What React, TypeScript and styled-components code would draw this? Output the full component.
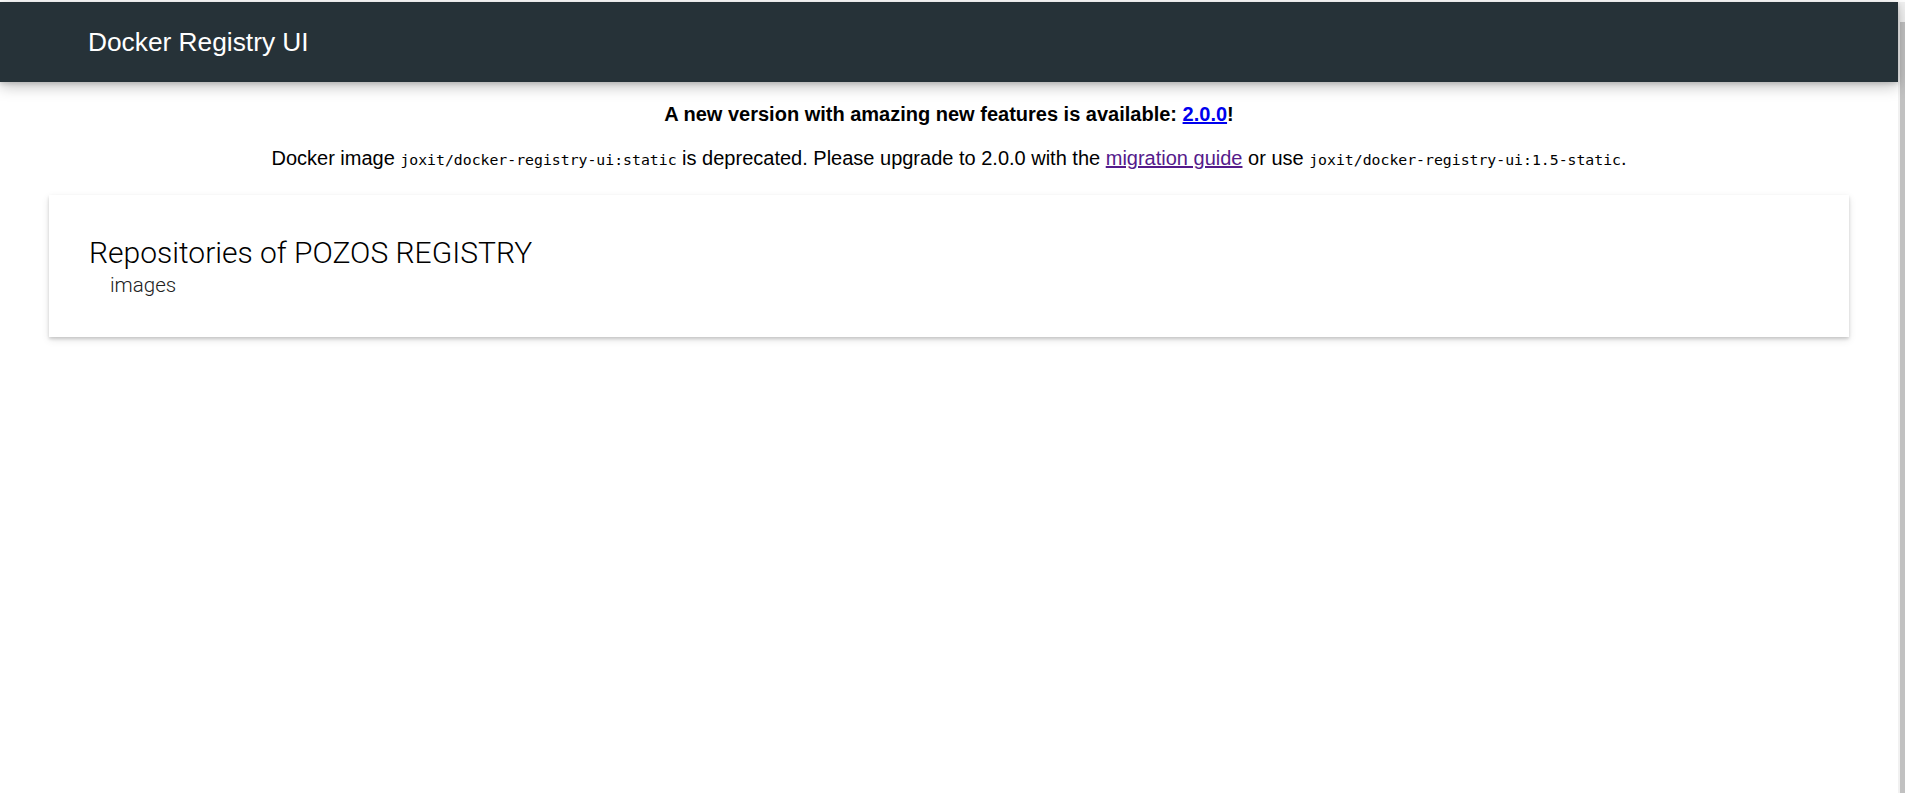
import React from "react";
import styled, { createGlobalStyle } from "styled-components";

const GlobalStyle = createGlobalStyle`
  body {
    margin: 0;
    background: #ffffff;
    font-family: "Liberation Sans", Arial, sans-serif;
    color: #000000;
    overflow: hidden;
  }
`;

const Page = styled.div`
  display: flex;
  padding-top: 2px;
  height: 793px;
  box-sizing: border-box;
`;

const Main = styled.div`
  flex: 1;
  min-width: 0;
  display: flex;
  flex-direction: column;
`;

const ScrollTrack = styled.div`
  width: 7px;
  display: flex;
  flex-direction: column;
  background: #f1f1f1;
`;

const ScrollArrowArea = styled.div`
  height: 20px;
`;

const ScrollThumb = styled.div`
  flex: 1;
  margin-left: 2px;
  background: #c1c1c1;
`;

const Header = styled.header`
  display: flex;
  align-items: center;
  height: 80px;
  padding-left: 88px;
  background: #263238;
  box-shadow: 0 4px 14px rgba(0, 0, 0, 0.26), 0 2px 4px rgba(0, 0, 0, 0.12);
  position: relative;
  z-index: 2;
`;

const Title = styled.span`
  color: #ffffff;
  font-family: "Liberation Sans", Arial, sans-serif;
  font-size: 26.3px;
  font-weight: 400;
  line-height: 30px;
`;

const Notice = styled.section`
  display: flex;
  flex-direction: column;
  align-items: center;
  gap: 20px;
  padding-top: 20px;
  font-family: "Liberation Sans", Arial, sans-serif;
  font-size: 20px;
  line-height: 24px;
  color: #000000;
`;

const NoticeLine = styled.p<{ $bold?: boolean }>`
  margin: 0;
  font-weight: ${(p) => (p.$bold ? 700 : 400)};
  text-align: center;
`;

const Link = styled.a<{ $visited?: boolean }>`
  color: ${(p) => (p.$visited ? "#551a8b" : "#0000ee")};
  text-decoration: underline;
`;

const Code = styled.code`
  font-family: "DejaVu Sans Mono", "Liberation Mono", monospace;
  font-size: 14.8px;
  line-height: 1;
`;

const Card = styled.main`
  margin: 25px 49px 0 49px;
  padding: 40px;
  background: #ffffff;
  box-shadow: 0 2px 3px rgba(0, 0, 0, 0.16), 0 3px 8px rgba(0, 0, 0, 0.1);
  display: flex;
  flex-direction: column;
  gap: 2px;
`;

const CardTitle = styled.h2`
  margin: 0;
  font-family: Roboto, "Noto Sans", sans-serif;
  font-size: 30px;
  font-weight: 300;
  line-height: 36px;
  color: #000000;
`;

const RepoItem = styled.div`
  padding-left: 21px;
  font-family: Roboto, "Noto Sans", sans-serif;
  font-size: 20.5px;
  font-weight: 300;
  line-height: 24px;
  color: #212121;
`;

export default function App() {
  return (
    <>
      <GlobalStyle />
      <Page>
        <Main>
          <Header>
            <Title>Docker Registry UI</Title>
          </Header>
          <Notice>
            <NoticeLine $bold>
              A new version with amazing new features is available:{" "}
              <Link href="#">2.0.0</Link>!
            </NoticeLine>
            <NoticeLine>
              Docker image <Code>joxit/docker-registry-ui:static</Code> is
              deprecated. Please upgrade to 2.0.0 with the{" "}
              <Link href="#" $visited>
                migration guide
              </Link>{" "}
              or use <Code>joxit/docker-registry-ui:1.5-static</Code>.
            </NoticeLine>
          </Notice>
          <Card>
            <CardTitle>Repositories of POZOS REGISTRY</CardTitle>
            <RepoItem>images</RepoItem>
          </Card>
        </Main>
        <ScrollTrack>
          <ScrollArrowArea />
          <ScrollThumb />
        </ScrollTrack>
      </Page>
    </>
  );
}
